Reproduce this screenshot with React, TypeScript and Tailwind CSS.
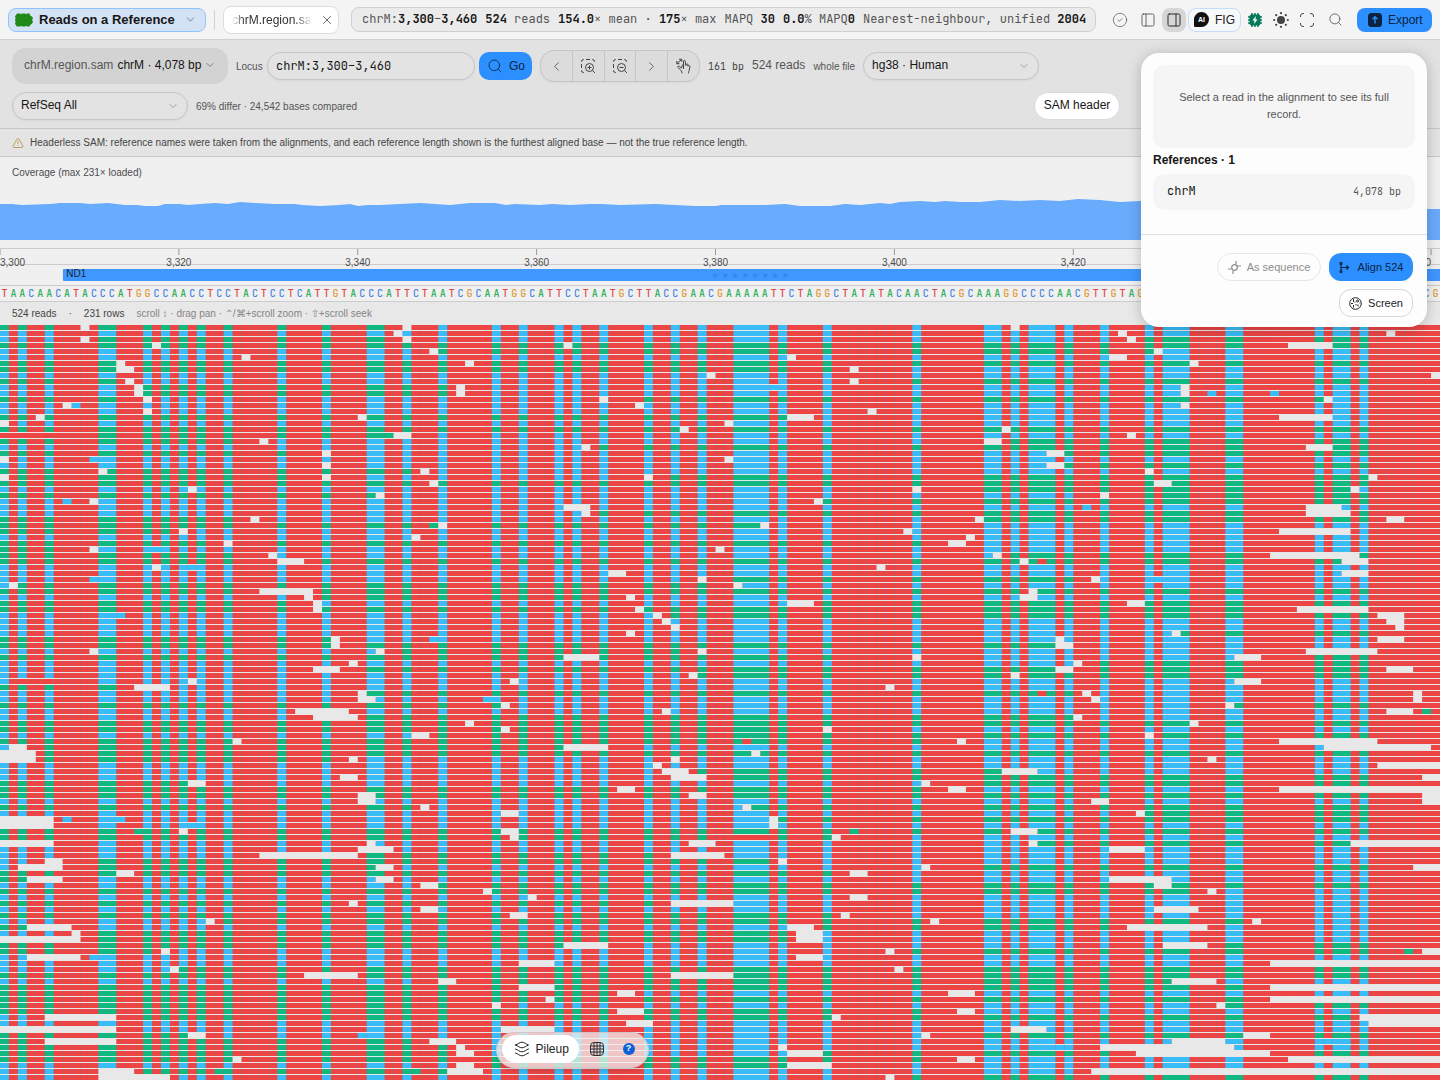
import type { ReactNode } from "react";
import {
  ChevronDown,
  ChevronLeft,
  ChevronRight,
  CircleCheck,
  PanelLeft,
  PanelRight,
  Search,
  TriangleAlert,
  X,
} from "lucide-react";

const BASES = 161;
const WIDTH = 1440;
const CELL = WIDTH / BASES;
const ROW = 6;

const SEQUENCE =
  "TAACAACATACCCATGGCCAACCTCCTACTCCTCATTGTACCCATTCTAATCGCAATGGCATTCCTAATGCTTACCGAACGAAAAATTCTAGGCTATATACAACTACGCAAAGGCCCCAACGTTGTAGGCCCCTACGGGCTACTACAACCCTTCGCTGACG";

const BASE_COLORS: Record<string, string> = {
  A: "#2fae5a",
  C: "#4a86e0",
  G: "#e09a3a",
  T: "#e04848",
};

// Columns where a read agrees with the reference and shows its strand colour.
const MATCHES = [
  0, 2, 5, 11, 12, 16, 18, 20, 22, 25, 31, 36, 41, 42, 45, 49, 55, 58, 62, 64,
  67, 72, 75, 78, 82, 83, 84, 85, 87, 92, 102, 110, 111, 113, 115, 116, 117,
  119, 123, 128, 130, 131, 132, 137, 138, 147, 149, 150, 152,
];

// One string per row: strand (b forward, g reverse), then gap start.length.
const ROWS = `g9.1g45.1b113.1b
b44.1b125.1b155.1b
b9.1g45.1b126.1g
g17.1g63.1g144.5g
b48.1g129.1b
b27.1b88.1b124.2b
g13.1g52.1g133.1g
g13.2g95.1b
b79.1b160.1
g14.1b95.1g
b15.1g51.1b132.1b
b15.1g51.1b132.1b
g16.1b67.1g148.1b
b7.1b71.1b132.1b
b16.1b97.1b
g4.1g40.1g88.3b143.6b
0.1b81.1b
g76.1g112.1g
g44.2b126.1b
g29.1b110.2g
b65.1g146.3g
g36.1b117.2g
0.1b81.1b
b36.1b117.2g
g11.1g47.1b128.1b
0.1g36.1b72.1g153.1b
g48.1g129.2g
b21.1b102.1g151.1b
g42.1b123.1g
b10.1b91.1g
b63.3b146.4b
b65.1g146.5g
g28.1b109.1g155.2g
g49.1g85.1b
g20.1b101.1b143.8b
b46.1b108.1b
g25.1g106.2b
g10.1b80.1b
g30.1b111.1g142.10g
g31.3g114.1g150.3b
b17.1b98.1b
b68.2b150.3b
b78.1g122.1b
b1.1g82.1b
g29.6g115.1g
b34.1g70.1b114.2b
g35.1b88.3g126.2g
g35.1g71.1g145.8b
b73.1g154.3b
b74.1b155.2b
b75.1b156.1b
b70.1b131.1g
g37.1b118.1b154.3b
g37.1g118.2b
b10.1b42.1g78.1b146.8b
g63.4g102.1b138.3g
b39.1b120.1g
b35.3g118.2g155.3g
b77.1g113.1g
b21.1b57.1b138.3b
g15.4b99.1b
b40.1g121.1b158.1b
b40.2b122.1b158.1b
g56.1b137.1g
b33.6b74.1b155.3g
b35.5g120.1b
g52.1g133.1g
g56.1g92.1b
b46.2g128.1g
g26.1g107.1b143.11b
b1.2g63.5b148.12b
0.4g84.1g
0.4g39.1b75.1b135.1b
b73.1b154.7
b74.3g112.4b
b38.2b75.4g159.2
g21.2b103.1g
g69.2g106.2b143.18
g40.2g77.2g159.2
b40.2b122.2b159.2
g47.1b83.1g
b56.2b127.1g
0.6b86.1g
0.6b86.1b
g20.1g56.2g113.3g
g57.1g93.1b
0.6b41.1b77.3b115.1g151.10
b40.4b124.4b
b29.11g75.6b
b5.2g87.1b
b2.5g42.2b103.1g158.3
g13.2g95.2b
g3.4b42.2b124.7b
b47.2g129.2g
g54.1g135.1b
b59.1b95.2b
g39.1g75.7b
b47.2b129.5b
g57.2g94.1b
b23.1g104.1g140.1b
g3.5b88.3g126.9b
b8.1g89.3b
0.9g89.3b
g63.5b130.5g
g18.1b99.1g159.2
b3.6b89.3b
b58.4b142.19
b19.1g100.1g
g34.6g75.7g
b49.2g131.5b
g58.4g142.19
g69.2b106.3b
g61.1g142.19
g55.1b136.1g
g69.3g107.2b
b5.8g93.1g152.9
b70.3b153.8
0.13b56.6b113.4b
g21.2b103.1g139.3g
g5.8g48.3b131.6b
g51.1b87.1b123.15b
g51.2b88.4g127.15g
g26.1g107.2b144.17
b51.2g88.5b
b11.4g50.4b122.39
b11.8b99.1g`.split("\n");

// Single bases that break the column pattern: row, column, length, colour.
const VARIANTS: [number, number, number, "r" | "b" | "g"][] = [
  [10, 86, 1, "b"],
  [11, 135, 1, "b"],
  [11, 142, 1, "b"],
  [13, 8, 1, "b"],
  [18, 0, 6, "r"],
  [18, 43, 1, "g"],
  [22, 10, 1, "b"],
  [29, 7, 1, "b"],
  [30, 121, 1, "b"],
  [33, 48, 1, "g"],
  [37, 17, 1, "b"],
  [39, 116, 1, "r"],
  [40, 21, 1, "b"],
  [42, 10, 1, "b"],
  [42, 129, 1, "b"],
  [48, 13, 1, "b"],
  [52, 48, 1, "b"],
  [59, 2, 4, "r"],
  [61, 116, 1, "r"],
  [62, 54, 1, "b"],
  [64, 159, 1, "g"],
  [69, 83, 1, "r"],
  [76, 84, 1, "b"],
  [82, 7, 1, "b"],
  [82, 12, 2, "b"],
  [83, 21, 1, "b"],
  [84, 15, 1, "g"],
  [84, 95, 1, "g"],
  [85, 82, 4, "r"],
  [101, 84, 1, "g"],
  [104, 157, 1, "g"],
  [105, 10, 1, "b"],
  [118, 40, 1, "b"],
  [119, 148, 1, "b"],
  [120, 118, 1, "b"],
  [124, 24, 1, "g"],
  [124, 46, 1, "g"],
];

const cell = (row: number, col: number, len: number) =>
  `M${(col * CELL).toFixed(2)} ${row * ROW}h${(len * CELL).toFixed(2)}v5h-${(len * CELL).toFixed(2)}z`;

function buildPaths() {
  const paths = { b: "", g: "", gaps: "", vr: "", vb: "", vg: "" };
  ROWS.forEach((line, row) => {
    let start = 0;
    for (const [, strand, at, len] of line.matchAll(/([bg]?)(?:(\d+)\.(\d+))?/g)) {
      const end = at ? Number(at) : BASES;
      if (strand) {
        MATCHES.filter((c) => c >= start && c < end).forEach((c) => {
          paths[strand as "b" | "g"] += cell(row, c, 1);
        });
      }
      if (at) {
        paths.gaps += cell(row, end, Number(len));
        start = end + Number(len);
      }
    }
  });
  VARIANTS.forEach(([row, col, len, c]) => {
    paths[`v${c}`] += cell(row, col, len);
  });
  return paths;
}

const PATHS = buildPaths();

function Pileup() {
  return (
    <svg
      viewBox={`0 0 ${WIDTH} 756`}
      preserveAspectRatio="none"
      className="block h-[756px] w-full"
      aria-label="Read pileup"
    >
      <rect width={WIDTH} height="756" fill="#ef4444" />
      {Array.from({ length: BASES - 1 }, (_, i) => {
        const x = (i + 1) * CELL;
        const a = x - Math.floor(x);
        return (
          <rect key={i} x={Math.floor(x)} width="1" height="756" fill="#6b7280" opacity={a * (1 - a) * 1.6} />
        );
      })}
      <path d={PATHS.b} fill="#38bdf8" />
      <path d={PATHS.g} fill="#10b981" />
      <path d={PATHS.vr} fill="#ef4444" />
      <path d={PATHS.vb} fill="#38bdf8" />
      <path d={PATHS.vg} fill="#10b981" />
      <path d={PATHS.gaps} fill="#e8e8e8" />
      {ROWS.map((_, i) => (
        <rect key={i} y={i * ROW + 5} width={WIDTH} height="1" fill="#e8e8e8" />
      ))}
    </svg>
  );
}

// Top edge of the coverage area, x and y within a 1440 × 40 box.
const COVERAGE =
  "0,4 12,4 22,5 50,4 60,3 80,3 90,4 108,3 125,5 137,5 145,6 158,6 165,4 180,4 188,5 200,4 215,3 228,4 240,2 255,3 275,4 295,4 302,5 320,6 340,5 350,4 358,6 368,5 380,5 400,4 420,3 435,4 450,5 470,3 495,3 506,5 515,4 540,5 552,4 570,5 590,4 602,4 620,5 655,4 675,5 695,6 715,6 722,5 745,5 765,5 785,4 800,6 830,6 845,4 860,5 880,3 890,4 900,2 920,1 935,2 945,1 960,2 980,2 1000,0 1020,1 1040,0 1060,1 1078,-1 1100,0 1120,2 1140,1 1428,9 1440,9";

function Tracks() {
  return (
    <div className="bg-[#f0f0f0]">
      <div className="h-[91px] pt-2">
        <p className="px-3 text-[10px] leading-4 text-[#4c4c4c]">Coverage (max 231× loaded)</p>
        <svg
          viewBox="0 0 1440 59"
          preserveAspectRatio="none"
          className="block h-[59px] w-full"
          aria-label="Coverage"
        >
          <polygon
            transform="translate(0 19)"
            points={`0,40 ${COVERAGE} 1440,40`}
            fill="#69abfc"
          />
        </svg>
      </div>
      <div className="h-[17px] border-y border-[#cccccc]">
        <svg className="block h-5 w-full overflow-visible" aria-label="Ruler">
          {Array.from({ length: 9 }, (_, i) => {
            const x = `${((i * 20) / BASES) * 100}%`;
            return (
              <g key={i}>
                <line x1={x} x2={x} y1="0" y2="6" stroke="#999999" />
                <text
                  x={x}
                  y="17"
                  textAnchor={i === 0 ? "start" : i === 8 ? "end" : "middle"}
                  fontSize="10"
                  fill="#4c4c4c"
                >
                  {`3,${300 + i * 20}`}
                </text>
              </g>
            );
          })}
        </svg>
      </div>
      <div className="h-[21px] border-b border-[#cccccc] pt-1">
        <svg className="block h-3 w-full" aria-label="Genes">
          <rect x="4.37%" width="96%" height="12" rx="1" fill="#3f98ff" />
          <text x="4.6%" y="8" fontSize="10" fill="#1b2530">
            ND1
          </text>
          <svg x="49.55%" width="80" overflow="visible">
            {Array.from({ length: 8 }, (_, i) => (
              <path key={i} d={`M${i * 10} 4l5 2.5l-5 2.5z`} fill="#3388ea" />
            ))}
          </svg>
        </svg>
      </div>
      <div className="h-4 border-b border-[#cccccc]">
        <svg className="block h-4 w-full" aria-label="Reference sequence">
          {SEQUENCE.split("").map((base, i) => (
            <text
              key={i}
              x={`${((i + 0.5) / BASES) * 100}%`}
              y="11"
              textAnchor="middle"
              fontSize="10"
              fontWeight="500"
              fill={BASE_COLORS[base]}
              className="font-['JetBrains_Mono','Liberation_Mono',monospace]"
            >
              {base}
            </text>
          ))}
        </svg>
      </div>
    </div>
  );
}

function IconButton({ label, active, children }: { label: string; active?: boolean; children: ReactNode }) {
  return (
    <button
      aria-label={label}
      className={`flex h-6 w-6 items-center justify-center rounded-lg ${active ? "bg-[#d6d6d6] text-[#2a2a2a]" : "text-[#4c4c4c]"}`}
    >
      {children}
    </button>
  );
}

function Select({ label, value }: { label: string; value: string }) {
  return (
    <label className="relative block w-44">
      <span className="sr-only">{label}</span>
      <select className="block h-7 w-full appearance-none rounded-[14px] border border-[#c6c6c6] bg-[#e3e3e3] px-2 pb-0.5 text-[12px] text-[#161616] shadow-xs">
        <option>{value}</option>
      </select>
      <ChevronDown size={12} strokeWidth={1.25} className="pointer-events-none absolute right-[9px] top-2 text-[#777777]" />
    </label>
  );
}

function Header() {
  return (
    <header className="flex h-10 items-center border-b border-[#cfcfcf] bg-[#f4f4f4] px-2">
      <button className="flex h-6 w-[198px] shrink-0 items-center rounded-lg border border-[#8fc2ff] bg-[#d4e2f5] pl-1.5 pr-2 text-[13px] font-bold text-[#161616]">
        <svg width="18" height="14" viewBox="0 0 18 14" className="mr-1.5">
          <path
            d="M2 .5h3l1 .8 1-.8h3l1 .8 1-.8h2.500l.7 2 2 1.200.8 1.800-.8 1v1l.8 1-.8 2-2 1.500-.7 1.500H12l-1-.8-1 .8H7l-1-.8-1 .8H2l-1-1-1-2 .6-1.500L0 7l.6-1.500L0 3.500z"
            fill="#1f8a17"
          />
        </svg>
        Reads on a Reference
        <ChevronDown size={13} strokeWidth={1.25} className="ml-auto text-[#555555]" />
      </button>
      <span className="ml-2 h-5 w-px shrink-0 bg-[#d2d2d2]" />
      <div className="ml-2 flex h-7 w-[116px] shrink-0 items-center justify-between rounded-lg border border-[#dcdcdc] bg-white pl-2 pr-px text-[12px] text-[#333333]">
        <span className="w-20 overflow-hidden whitespace-nowrap [mask-image:linear-gradient(to_right,transparent,black_12px,black_64px,transparent)]">
          chrM.region.sam
        </span>
        <button aria-label="Close tab" className="flex h-5 w-5 items-center justify-center">
          <X size={14} strokeWidth={1.25} />
        </button>
      </div>
      <div className="ml-3 flex h-[25px] min-w-0 flex-1 items-center gap-2 overflow-hidden whitespace-nowrap rounded-lg border border-[#cfcfcf] bg-[#ebebeb] pl-2.5 pr-1 pb-0.5 font-['JetBrains_Mono','Liberation_Mono',monospace] text-[12px] text-[#555555] [&_b]:text-[#161616]">
        <span>chrM:<b>3,300</b>–<b>3,460</b></span>
        <span><b>524</b> reads</span>
        <span><b>154.0</b>× mean · <b>175</b>× max</span>
        <span>MAPQ <b>30</b></span>
        <span><b>0.0</b>% MAPQ<b>0</b></span>
        <span>Nearest-neighbour, unified <b>2004</b></span>
      </div>
      <div className="ml-3 flex shrink-0 items-center gap-0.5">
        <IconButton label="Status"><CircleCheck size={16} strokeWidth={1} /></IconButton>
        <div className="ml-0.5 flex gap-0.5">
          <IconButton label="Left panel"><PanelLeft size={16} strokeWidth={1.25} /></IconButton>
          <IconButton label="Right panel" active><PanelRight size={16} strokeWidth={1.5} /></IconButton>
        </div>
        <button className="flex h-6 w-[53px] items-center gap-1.5 rounded-lg border border-[#c5dcf7] bg-[#f7f8fa] pl-[5px] text-[12px] text-[#222222]">
          <svg width="15" height="15" viewBox="0 0 15 15" aria-hidden>
            <path d="M7.500 0a7.500 7.500 0 0 1 0 15H1.200A1.200 1.200 0 0 1 0 13.800V7.500A7.500 7.500 0 0 1 7.500 0z" fill="#111111" />
            <text x="7.500" y="10" textAnchor="middle" fontSize="7" fontWeight="700" fill="#ffffff">AI</text>
          </svg>
          FIG
        </button>
        <IconButton label="Compute">
          <svg width="14" height="14" viewBox="0 0 14 14">
            <rect x="1.500" y="1.500" width="11" height="11" rx="2" fill="#057a5b" />
            <path d="M4 0v14M7 0v14M10 0v14M0 4h14M0 7h14M0 10h14" stroke="#057a5b" strokeWidth="1.500" />
            <path d="M7.800 3L4.500 7.500h2L6.200 11l3.300-4.500h-2z" fill="#ffffff" />
          </svg>
        </IconButton>
        <IconButton label="Theme">
          <svg width="16" height="16" viewBox="0 0 16 16" fill="#444444">
            <circle cx="8" cy="8" r="4" />
            <circle cx="8" cy="1.200" r="1.100" />
            <circle cx="8" cy="14.800" r="1.100" />
            <circle cx="1.200" cy="8" r="1.100" />
            <circle cx="14.800" cy="8" r="1.100" />
            <circle cx="3.200" cy="3.200" r="1.100" />
            <circle cx="12.800" cy="3.200" r="1.100" />
            <circle cx="3.200" cy="12.800" r="1.100" />
            <circle cx="12.800" cy="12.800" r="1.100" />
          </svg>
        </IconButton>
        <IconButton label="Fullscreen">
          <svg width="14" height="14" viewBox="0 0 14 14" fill="none" stroke="currentColor">
            <path d="M.5 4V3A2.500 2.500 0 0 1 3 .5h1M10 .5h1A2.500 2.500 0 0 1 13.500 3v1M13.500 10v1a2.500 2.500 0 0 1-2.500 2.500h-1M4 13.500H3A2.500 2.500 0 0 1 .5 11v-1" />
          </svg>
        </IconButton>
        <div className="ml-0.5"><IconButton label="Search"><Search size={15} strokeWidth={1.25} /></IconButton></div>
        <button className="ml-2 flex h-6 w-[75px] items-center gap-1.5 rounded-lg bg-[#2b8fff] pl-[11px] text-[12px] text-[#0c2340]">
          <svg width="14" height="14" viewBox="0 0 14 14">
            <rect width="14" height="14" rx="3.500" fill="#0c2340" />
            <path d="M7 10.500V4M4.500 6.300L7 3.800l2.500 2.500" fill="none" stroke="#2b8fff" strokeWidth="1.400" />
          </svg>
          Export
        </button>
      </div>
    </header>
  );
}

function ZoomIcon({ out }: { out?: boolean }) {
  return (
    <svg width="16" height="16" viewBox="0 0 16 16" fill="none" stroke="currentColor">
      <path d="M1.500 4V3.500a2 2 0 0 1 2-2H4M6 1.500h4M12 1.500h.500a2 2 0 0 1 2 2V4M1.500 6v4M1.500 12v.5a2 2 0 0 0 2 2H4" />
      <circle cx="9.500" cy="9.500" r="4" />
      <path d={out ? "M12.500 12.500L15 15M7.500 9.500h4" : "M12.500 12.500L15 15M7.500 9.500h4M9.500 7.500v4"} />
    </svg>
  );
}

function Toolbar() {
  return (
    <div className="border-b border-[#c6c6c6] bg-[#e2e2e2] pb-2 pl-3 pr-80 pt-2">
      <div className="flex h-9 items-center gap-2 whitespace-nowrap">
        <label className="flex h-9 w-[216px] shrink-0 items-center rounded-[14px] bg-[#d3d3d3] px-3 pb-0.5 text-[12px] text-[#555555]">
          <span>chrM.region.sam</span>
          <select className="ml-1 w-[86px] appearance-none text-[#161616]">
            <option>chrM · 4,078 bp</option>
          </select>
          <ChevronDown size={12} strokeWidth={1.25} className="ml-auto shrink-0" />
        </label>
        <div className="flex shrink-0 items-center gap-1">
          <label htmlFor="locus" className="w-[27px] text-[10px] text-[#555555]">Locus</label>
          <input
            id="locus"
            defaultValue="chrM:3,300–3,460"
            className="h-7 w-52 rounded-[14px] border border-[#c6c6c6] bg-[#e3e3e3] px-2 font-['JetBrains_Mono','Liberation_Mono',monospace] text-[12px] text-[#161616] shadow-xs"
          />
          <button className="flex h-7 w-[53px] items-center gap-1.5 rounded-[10px] bg-[#2b8fff] pl-2 text-[12px] text-[#0c2340]">
            <Search size={16} strokeWidth={1.25} />
            Go
          </button>
        </div>
        <div className="flex h-8 w-40 shrink-0 divide-x divide-[#c6c6c6] overflow-hidden rounded-[14px] border border-[#c6c6c6] bg-[#dcdcdc] text-[#444444] shadow-xs [&_button]:flex [&_button]:flex-1 [&_button]:items-center [&_button]:justify-center">
          <button aria-label="Pan left"><ChevronLeft size={15} strokeWidth={1.25} /></button>
          <button aria-label="Zoom in"><ZoomIcon /></button>
          <button aria-label="Zoom out"><ZoomIcon out /></button>
          <button aria-label="Pan right"><ChevronRight size={15} strokeWidth={1.25} /></button>
          <button aria-label="Gestures">
            <svg width="16" height="16" viewBox="0 0 16 16" fill="none" stroke="currentColor" strokeLinecap="round" strokeLinejoin="round">
              <path d="M6 15c0-1.500-1-2.500-2-3.500L2 9.300c-.5-1 .5-1.600 1.300-.9L5.500 10 6.500 7M7.500 10.500V3.200c0-1.200 1.600-1.200 1.700 0l.6 4.300.7-1.300c.5-.7 1.400-.3 1.400.5l-.1 1.500.9-.6c.7-.3 1.300.3 1.200 1l-.6 3.400c-.2 1-.8 1.500-.8 3M1 5.500l4.500-4M.8 3.300v2.400h2.300M3.500 1.300h2.200v2.200" />
            </svg>
          </button>
        </div>
        <span className="font-['JetBrains_Mono','Liberation_Mono',monospace] text-[10px] text-[#444444]">161 bp</span>
        <span className="pb-0.5 text-[12px] text-[#555555]">524 reads</span>
        <span className="text-[10px] text-[#555555]">whole file</span>
        <Select label="Genome" value="hg38 · Human" />
      </div>
      <div className="mt-2 flex h-7 items-center gap-2">
        <Select label="Gene track" value="RefSeq All" />
        <span className="text-[10px] text-[#555555]">69% differ · 24,542 bases compared</span>
        <button className="ml-auto h-7 w-[86px] rounded-[14px] border border-[#dadada] bg-white pb-0.5 text-[12px] text-[#161616]">
          SAM header
        </button>
      </div>
    </div>
  );
}

function DetailPanel() {
  return (
    <aside className="absolute right-[13px] top-[53px] w-[286px] rounded-[18px] bg-[#fdfdfd] shadow-[0_2px_14px_rgba(0,0,0,0.22)]">
      <div className="px-3 pt-3">
        <p className="flex h-[83px] items-center justify-center rounded-xl bg-[#f5f5f5] px-4 pb-0.5 text-center text-[11px] leading-[17px] text-[#555555]">
          Select a read in the alignment to see its full record.
        </p>
        <h2 className="mt-1 text-[12px] font-bold leading-4 text-[#161616]">References · 1</h2>
        <div className="mt-1.5 flex h-9 items-center justify-between rounded-xl bg-[#f5f5f5] px-3.5 pb-0.5 font-['JetBrains_Mono','Liberation_Mono',monospace]">
          <span className="text-[12px] text-[#161616]">chrM</span>
          <span className="text-[10px] text-[#555555]">4,078 bp</span>
        </div>
      </div>
      <div className="mt-6 flex flex-wrap justify-end gap-2 border-t border-[#dedede] px-3.5 pb-2.5 pt-[18px] text-[11px]">
        <button disabled className="flex h-7 w-[104px] items-center justify-center gap-1.5 rounded-[14px] border border-[#e6e6e6] text-[#8d8d8d]">
          <svg width="13" height="13" viewBox="0 0 13 13" fill="none" stroke="currentColor" strokeWidth="1.200">
            <path d="M0 8h4.500M8.500 5H13M5 13V9.500M8 3.500V0" />
            <circle cx="6.500" cy="6.500" r="2.800" />
          </svg>
          As sequence
        </button>
        <button className="flex h-7 w-21 items-center justify-center gap-2 rounded-[12px] bg-[#2b8fff] text-[#0c2340]">
          <svg width="11" height="11" viewBox="0 0 11 11" fill="none" stroke="currentColor" strokeWidth="1.200">
            <circle cx="2" cy="1.500" r="1" />
            <circle cx="2" cy="9.500" r="1" />
            <path d="M2 2.500v6M2 5.500h7.500M7.500 3.500l2 2-2 2" />
          </svg>
          Align 524
        </button>
        <button className="flex h-7 w-[74px] items-center justify-center gap-1.5 rounded-[12px] border border-[#d6d6d6] bg-white text-[#222222]">
          <svg width="13" height="13" viewBox="0 0 13 13" fill="none" stroke="currentColor">
            <circle cx="6.500" cy="6.500" r="5.800" />
            <circle cx="8.500" cy="4" r="1" />
            <path d="M4.500 2v3M2 6.500h2M4.500 8v2.500M7 7v1.500M9 7.500v2M10.500 6h1M6 4.500v1" />
          </svg>
          Screen
        </button>
      </div>
    </aside>
  );
}

function Dock() {
  return (
    <nav className="pointer-events-none absolute inset-x-0 bottom-3 flex justify-center pr-74">
      <div className="pointer-events-auto flex h-9 w-[153px] items-center rounded-[18px] border border-[#d5c5c5] bg-[#f0f0f0]/75 pb-0.5 pl-[5px] shadow-md">
        <button className="flex h-7 w-[77px] items-center gap-1.5 rounded-[14px] bg-white pl-3 text-[12px] text-[#222222]">
          <svg width="16" height="16" viewBox="0 0 16 16" fill="none" stroke="currentColor" strokeLinejoin="round" strokeLinecap="round">
            <path d="M1.500 4C4 3.200 5.500 1.200 8 1.200S12 3.200 14.500 4C12 4.800 10.500 6.800 8 6.800S4 4.800 1.500 4zM1.500 8c2.500.8 4 2.800 6.500 2.800S12 8.800 14.500 8M1.500 12c2.500.8 4 2.800 6.500 2.800s4-2 6.500-2.800" />
          </svg>
          Pileup
        </button>
        <button aria-label="Grid" className="ml-1 flex h-7 w-7 items-center justify-center text-[#333333]">
          <svg width="14" height="14" viewBox="0 0 14 14" fill="none" stroke="currentColor">
            <rect x=".5" y=".5" width="13" height="13" rx="3.500" />
            <path d="M4 .5v13M7 .5v13M10 .5v13M.5 4h13M.5 7h13M.5 10h13" />
          </svg>
        </button>
        <button aria-label="Help" className="ml-1 flex h-7 w-7 items-center justify-center">
          <span className="flex h-3 w-3 items-center justify-center rounded-full bg-[#0b62d6] text-[9px] font-bold text-white">?</span>
        </button>
      </div>
    </nav>
  );
}

export default function App() {
  return (
    <div className="relative flex h-screen flex-col overflow-hidden bg-[#e8e8e8] font-['Liberation_Sans',Arial,sans-serif]">
      <Header />
      <Toolbar />
      <div className="flex h-7 shrink-0 items-center gap-1.5 border-b border-[#c6c6c6] bg-[#e4e4e4] px-3 text-[10px] text-[#444444]">
        <TriangleAlert size={12} strokeWidth={1.5} className="text-[#b08a35]" />
        Headerless SAM: reference names were taken from the alignments, and each reference length shown is the furthest aligned base — not the true reference length.
      </div>
      <Tracks />
      <div className="flex h-[23px] shrink-0 items-center gap-3 px-3 text-[10px] text-[#444444]">
        <span>524 reads</span>
        <span>·</span>
        <span>231 rows</span>
        <span className="text-[#858585]">scroll ↕ · drag pan · ⌃/⌘+scroll zoom · ⇧+scroll seek</span>
      </div>
      <main className="min-h-0 flex-1 overflow-hidden">
        <Pileup />
      </main>
      <DetailPanel />
      <Dock />
    </div>
  );
}
